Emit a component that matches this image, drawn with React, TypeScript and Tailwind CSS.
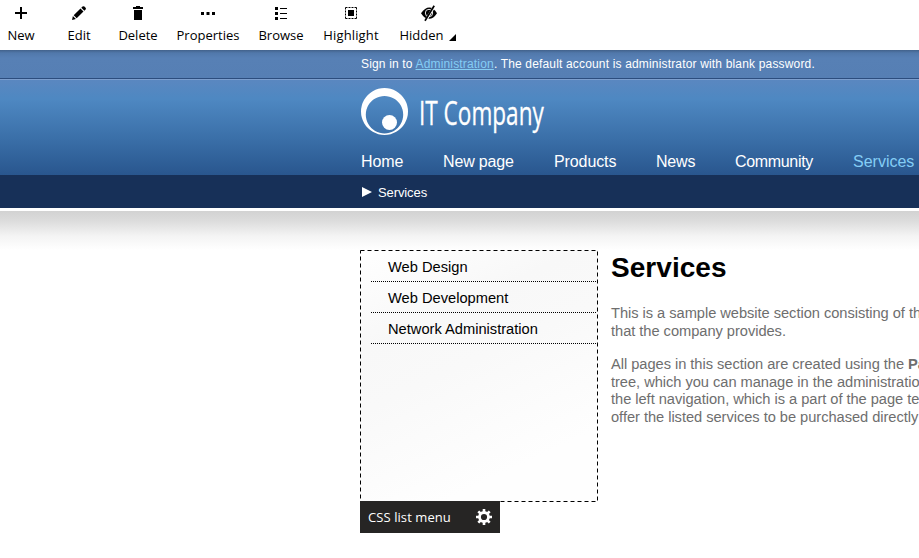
import type { ReactNode } from "react";

type ToolProps = { label: string; cls: string; children: ReactNode; more?: boolean };

function Tool({ label, cls, children, more }: ToolProps) {
  return (
    <button className={`flex h-[50px] flex-col items-center pt-1 ${cls}`}>
      <svg width="18" height="18" viewBox="0 0 18 18" className="shrink-0">{children}</svg>
      <span className="mt-[4px] flex h-[18px] items-center whitespace-nowrap leading-[18px]">
        {label}
        {more && (
          <svg width="8" height="8" viewBox="0 0 8 8" className="ml-[5px] mt-[6px]">
            <path d="M7 0v7H0z" />
          </svg>
        )}
      </span>
    </button>
  );
}

function Toolbar() {
  return (
    <div className="flex h-[50px] bg-white font-['Open_Sans','Noto_Sans',sans-serif] text-[13px] text-black">
      <Tool label="New" cls="w-[42px]">
        <path d="M8 3h2v5h5v2h-5v5H8v-5H3V8h5z" />
      </Tool>
      <Tool label="Edit" cls="ml-[16px] w-[42px]">
        <path d="M2 15.9l.9-3.9 3 3zM3.7 11.2l6.8-6.6 3 3-6.8 6.6zM11.3 3.8l1.2-1.2q1-.9 1.9 0l1.2 1.2q.8.9 0 1.8l-1.2 1.2z" />
      </Tool>
      <Tool label="Delete" cls="ml-[9px] w-[58px]">
        <path d="M4 3h3V2h4v1h3v2H4zM5 6h8v10H5z" />
      </Tool>
      <Tool label="Properties" cls="w-[82px]">
        <path d="M2 8h3v3H2zM7.5 8h3v3h-3zM13 8h3v3h-3z" />
      </Tool>
      <Tool label="Browse" cls="w-[64px]">
        <path d="M3 3h3v3H3zM3 8h3v3H3zM3 13h3v3H3zM8 4h7v1H8zM8 9h7v1H8zM8 14h7v1H8z" />
      </Tool>
      <Tool label="Highlight" cls="w-[76px] tracking-[0.15px]">
        <path d="M6 6h6v6H6z" />
        <path d="M3.5 3.5h11M3.5 14.5h11M3.5 3.5v11M14.5 3.5v11" stroke="black" strokeDasharray="2 1" fill="none" />
      </Tool>
      <Tool label="Hidden" cls="w-[78px]" more>
        <g transform="translate(1 0)">
          <path d="M1 9.3Q5 3.4 9.3 3.4T17 9.3Q13.5 14.8 9 14.8T1 9.3z" />
          <circle cx="9" cy="9" r="3.7" fill="none" stroke="white" strokeWidth=".9" />
          <path d="M14.8 1.5L5.5 17" stroke="white" strokeWidth="2.6" />
          <path d="M14.2 1.7L5 16.8" stroke="black" strokeWidth="1.7" />
        </g>
      </Tool>
    </div>
  );
}

function Logo() {
  return (
    <div className="flex h-[48px] items-center">
      <svg width="48" height="48" viewBox="0 0 48 48" className="shrink-0">
        <path fillRule="evenodd" fill="white" d="M23.5 0a23.5 23.5 0 1 0 .01 0zM23.5 8a18.7 18.7 0 1 1-.01 0z" />
        <circle cx="28.5" cy="34.5" r="7.5" fill="white" />
      </svg>
      <span className="ml-[10px] mt-[2px] origin-left scale-x-[0.684] whitespace-nowrap font-['Open_Sans',sans-serif] text-[33px] leading-[48px] text-white [-webkit-text-stroke:0.3px_white]">
        IT Company
      </span>
    </div>
  );
}

const navItems = [
  { label: "Home", cls: "w-[82px] tracking-[-0.1px]" },
  { label: "New page", cls: "w-[111px] tracking-[-0.15px]" },
  { label: "Products", cls: "w-[102px] tracking-[-0.1px]" },
  { label: "News", cls: "w-[79px] tracking-[-0.2px]" },
  { label: "Community", cls: "w-[118px] tracking-[-0.33px]" },
  { label: "Services", cls: "text-[#84cdf5]" },
];

function Header() {
  return (
    <header className="text-white">
      <div className="h-[28px] bg-[linear-gradient(#42628b_0px,#5178ab_3px,#5780b5_8px,#567fb4_28px)] pl-[361px] pt-px text-[12px] leading-[27px]">
        <p className="whitespace-nowrap tracking-[0.165px]">
          Sign in to <a className="text-[#84cdf5] underline">Administration</a>. The default account is administrator with blank password.
        </p>
      </div>
      <div className="h-px bg-[#2c4d7e]" />
      <div className="h-px bg-[#7d9fce]" />
      <div className="h-[95px] bg-[linear-gradient(#5a87c0,#4e88c2_20%,#3a6fa8_62%,#29568e)] pl-[361px] pt-[8px]">
        <Logo />
        <nav className="mt-[17px] flex h-[18px] text-[16px] leading-[18px]">
          {navItems.map((n) => (
            <a key={n.label} className={`shrink-0 whitespace-nowrap ${n.cls}`}>{n.label}</a>
          ))}
        </nav>
      </div>
      <div className="flex h-[33px] items-center bg-[#173058] pl-[362px] text-[13px]">
        <svg width="10" height="10" viewBox="0 0 10 10" className="mt-px"><path fill="white" d="M0 0l10 5-10 5z" /></svg>
        <span className="ml-[6px] mt-[2px] tracking-[-0.1px]">Services</span>
      </div>
    </header>
  );
}

function SideMenu() {
  return (
    <aside className="w-[238px] shrink-0">
      <div className="relative h-[252px] bg-[linear-gradient(155deg,#fff_0%,#f8f8f8_28%,#f9f9f9_45%,#fefefe_80%)]">
        <svg width="238" height="252" className="absolute inset-0">
          <rect x=".5" y=".5" width="237" height="251" fill="none" stroke="black" strokeDasharray="4 3" />
        </svg>
        <ul className="ml-[11px] mr-[2px] pt-px text-[14.67px] text-black">
          {["Web Design", "Web Development", "Network Administration"].map((t) => (
            <li key={t} className="h-[31px] border-b border-dotted border-black pl-[17px] leading-[32px]">{t}</li>
          ))}
        </ul>
      </div>
      <div className="relative -mt-px flex h-[32px] w-[140px] items-center justify-between bg-[#262524] pl-[8px] pr-[8px] font-['Open_Sans','Noto_Sans',sans-serif] text-[13px] text-white">
        <span className="mt-px tracking-[0.08px]">CSS list menu</span>
        <svg width="16" height="16" viewBox="0 0 16 16">
          <circle cx="8" cy="8" r="4.5" fill="none" stroke="white" strokeWidth="2.8" />
          <path d="M8 0v3M8 13v3M0 8h3M13 8h3M2.3 2.3l2.2 2.2M11.5 11.5l2.2 2.2M13.7 2.3l-2.2 2.2M4.5 11.5l-2.2 2.2" stroke="white" strokeWidth="2.6" />
        </svg>
      </div>
    </aside>
  );
}

export default function App() {
  return (
    <div className="h-[558px] w-[919px] overflow-hidden bg-white font-['Liberation_Sans',Arial,sans-serif]">
      <Toolbar />
      <Header />
      <div className="mt-[3px] h-[39px] bg-[linear-gradient(#d2d2d2,#dcdcdc_25%,#f4f4f4_65%,#fff)]" />
      <main className="flex pl-[360px]">
        <SideMenu />
        <article className="ml-[13px] shrink-0 whitespace-nowrap text-[14.67px] leading-[17.5px] tracking-[-0.04px] text-[#6e6e6e]">
          <h1 className="mt-[1px] text-[28px] font-bold leading-[34px] tracking-[0.05px] text-black">Services</h1>
          <p className="mt-[20px]">
            This is a sample website section consisting of th<br />
            that the company provides.
          </p>
          <p className="mt-[16px]">
            All pages in this section are created using the <b>Pa</b><br />
            tree, which you can manage in the administratio<br />
            the left navigation, which is a part of the page ter<br />
            offer the listed services to be purchased directly
          </p>
        </article>
      </main>
    </div>
  );
}
